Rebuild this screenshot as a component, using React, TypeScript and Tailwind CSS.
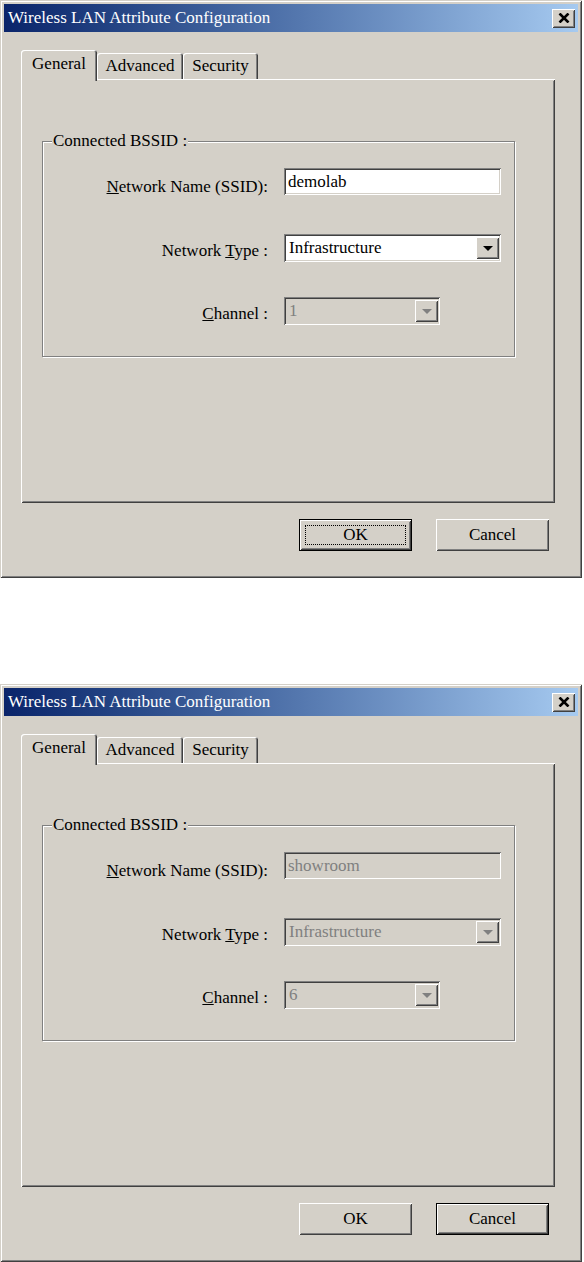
import React from "react";

const raised =
  "shadow-[inset_1px_1px_0_#ffffff,inset_-1px_-1px_0_#404040,inset_2px_2px_0_#d4d0c8,inset_-2px_-2px_0_#808080]";
const sunken =
  "shadow-[inset_1px_1px_0_#808080,inset_-1px_-1px_0_#ffffff,inset_2px_2px_0_#404040,inset_-2px_-2px_0_#d4d0c8]";
const frame =
  "shadow-[inset_1px_1px_0_#d4d0c8,inset_-1px_-1px_0_#404040,inset_2px_2px_0_#ffffff,inset_-2px_-2px_0_#808080]";
const tabShadow =
  "shadow-[inset_1px_1px_0_#ffffff,inset_-1px_0_0_#404040,inset_-2px_0_0_#808080]";

function Arrow({ disabled }: { disabled?: boolean }) {
  return (
    <svg width="10" height="5" viewBox="0 0 10 5">
      <path d="M0 0h10L5 5z" fill={disabled ? "#808080" : "#000000"} />
    </svg>
  );
}

function Combo({
  value,
  wide,
  disabled,
}: {
  value: string;
  wide?: boolean;
  disabled?: boolean;
}) {
  return (
    <div
      className={`${wide ? "w-[217px]" : "w-[156px]"} h-[28px] p-[2px] flex ${sunken} ${
        disabled ? "bg-[#d4d0c8] text-[#808080]" : "bg-white text-black"
      }`}
    >
      <div className="flex-1 flex items-center pl-[3px] overflow-hidden whitespace-nowrap">
        {value}
      </div>
      <div
        className={`w-[23px] h-[22px] my-[1px] bg-[#d4d0c8] flex items-center justify-center ${raised}`}
      >
        <Arrow disabled={disabled} />
      </div>
    </div>
  );
}

function Dialog({ first }: { first?: boolean }) {
  return (
    <div
      className={`w-[582px] h-[578px] shrink-0 bg-[#d4d0c8] p-[4px] flex flex-col ${frame}`}
    >
      {/* title bar */}
      <div className="h-[28px] shrink-0 bg-linear-to-r from-[#0a246a] to-[#a6caf0] flex items-center pl-[4px] pr-[3px]">
        <span className="text-white">Wireless LAN Attribute Configuration</span>
        <div
          className={`ml-auto w-[23px] h-[19px] bg-[#d4d0c8] flex items-center justify-center pb-[1px] ${raised}`}
        >
          <svg width="12" height="10" viewBox="0 0 12 10">
            <path
              d="M1.5 0.5L10.5 9.5M10.5 0.5L1.5 9.5"
              stroke="#000000"
              strokeWidth="2.6"
            />
          </svg>
        </div>
      </div>

      {/* tabs */}
      <div className="mt-[18px] ml-[17px] h-[29px] flex items-end shrink-0">
        <div
          className={`relative z-10 w-[76px] h-[31px] -mb-[2px] bg-[#d4d0c8] rounded-t-[3px] flex justify-center pt-[4px] ${tabShadow}`}
        >
          General
        </div>
        <div
          className={`w-[86px] h-[26px] bg-[#d4d0c8] rounded-t-[3px] flex justify-center pt-[3px] ${tabShadow}`}
        >
          Advanced
        </div>
        <div
          className={`w-[75px] h-[26px] bg-[#d4d0c8] rounded-t-[3px] flex justify-center pt-[3px] ${tabShadow}`}
        >
          Security
        </div>
      </div>

      {/* tab panel */}
      <div
        className={`ml-[17px] w-[534px] h-[424px] shrink-0 pt-[62px] pl-[21px] ${raised}`}
      >
        <div className="w-[473px] h-[216px] border border-[#808080] shadow-[inset_1px_1px_0_#ffffff,1px_1px_0_#ffffff] flex flex-col">
          <div className="-mt-[11px] ml-[9px] w-fit px-[1px] bg-[#d4d0c8]">
            Connected BSSID :
          </div>

          {/* row 1 */}
          <div className="mt-[17px] flex items-start">
            <div className="w-[225px] text-right mt-[9px]">
              <u>N</u>etwork Name (SSID):
            </div>
            <div
              className={`ml-[16px] w-[217px] h-[27px] p-[2px] flex items-center ${sunken} ${
                first ? "bg-white text-black" : "bg-[#d4d0c8] text-[#808080]"
              }`}
            >
              <span className="pl-[2px]">{first ? "demolab" : "showroom"}</span>
            </div>
          </div>

          {/* row 2 */}
          <div className="mt-[37px] flex items-start">
            <div className="w-[225px] text-right mt-[7px]">
              Network <u>T</u>ype :
            </div>
            <div className="ml-[16px]">
              <Combo value="Infrastructure" wide disabled={!first} />
            </div>
          </div>

          {/* row 3 */}
          <div className="mt-[35px] flex items-start">
            <div className="w-[225px] text-right mt-[7px]">
              <u>C</u>hannel :
            </div>
            <div className="ml-[16px]">
              <Combo value={first ? "1" : "6"} disabled />
            </div>
          </div>
        </div>
      </div>

      {/* buttons */}
      <div className="mt-[16px] flex justify-end gap-[24px] pr-[29px]">
        {first ? (
          <div className="w-[113px] h-[32px] border border-black">
            <div
              className={`w-full h-full p-[5px] bg-[#d4d0c8] ${raised}`}
            >
              <div className="w-full h-full border border-dotted border-black flex items-center justify-center">
                OK
              </div>
            </div>
          </div>
        ) : (
          <div
            className={`w-[113px] h-[32px] flex items-center justify-center ${raised}`}
          >
            OK
          </div>
        )}
        {first ? (
          <div
            className={`w-[113px] h-[32px] flex items-center justify-center ${raised}`}
          >
            Cancel
          </div>
        ) : (
          <div className="w-[113px] h-[32px] border border-black">
            <div
              className={`w-full h-full flex items-center justify-center ${raised}`}
            >
              Cancel
            </div>
          </div>
        )}
      </div>
    </div>
  );
}

export default function App() {
  return (
    <div className="w-[584px] h-[1262px] bg-white flex flex-col gap-[106px] font-['Liberation_Serif',serif] text-[17px] leading-[20px] text-black">
      <Dialog first />
      <Dialog />
    </div>
  );
}
